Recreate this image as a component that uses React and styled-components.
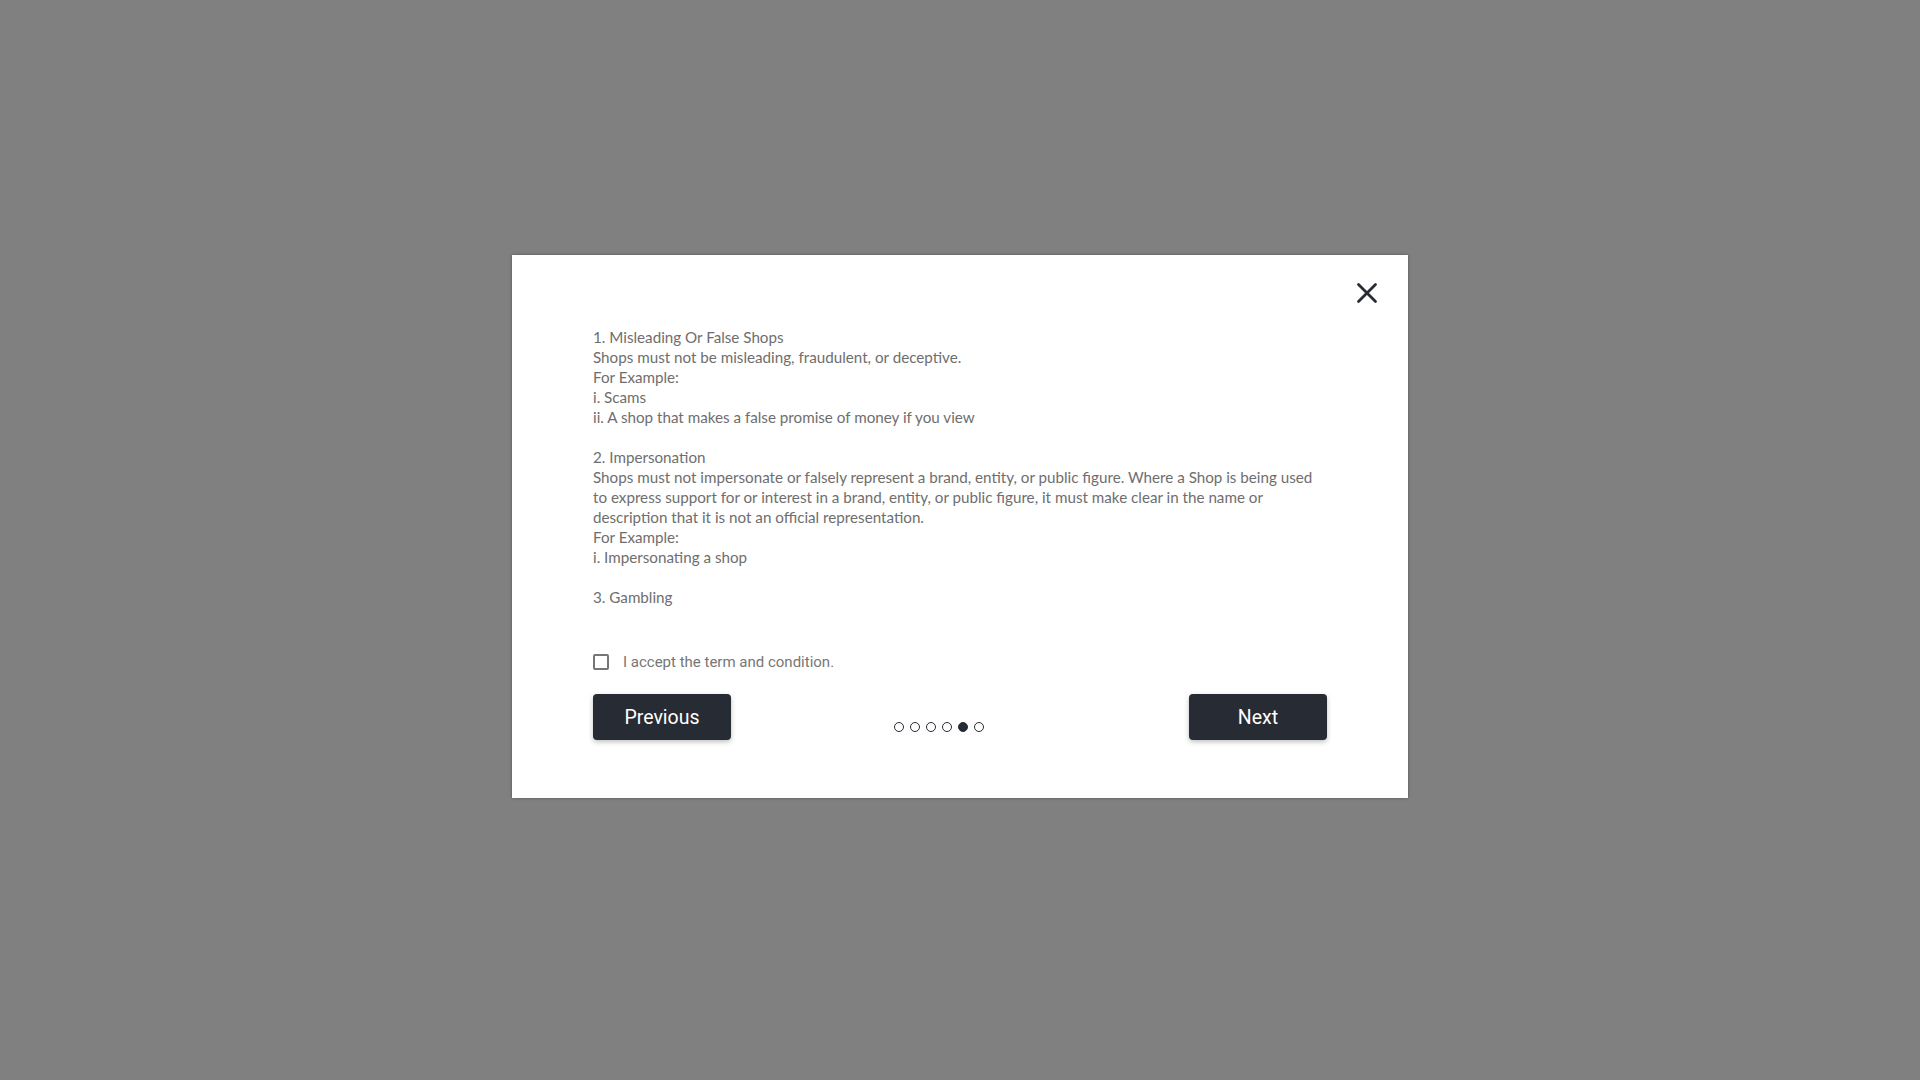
import React, { useState } from "react";
import styled, { createGlobalStyle } from "styled-components";

const GlobalStyle = createGlobalStyle`
    html, body {
        margin: 0;
        padding: 0;
        height: 100%;
    }
    body {
        background: #808080;
        font-family: "Lato", "Liberation Sans", sans-serif;
    }
    #root {
        height: 100%;
    }
`;

const sections = [
    {
        title: "1. Misleading Or False Shops",
        lines: [
            "Shops must not be misleading, fraudulent, or deceptive.",
            "For Example:",
            "i. Scams",
            "ii. A shop that makes a false promise of money if you view",
        ],
    },
    {
        title: "2. Impersonation",
        lines: [
            "Shops must not impersonate or falsely represent a brand, entity, or public figure. Where a Shop is being used to express support for or interest in a brand, entity, or public figure, it must make clear in the name or description that it is not an official representation.",
            "For Example:",
            "i. Impersonating a shop",
        ],
    },
    {
        title: "3. Gambling",
        lines: [],
    },
];

const App = () => {
    const [accepted, setAccepted] = useState(false);
    const step = 4;

    return (
        <>
            <GlobalStyle />
            <Overlay>
                <Modal>
                    <CloseBtn aria-label="close">
                        <svg width="22" height="22" viewBox="0 0 22 22">
                            <path d="M2.5 2.5 L19.5 19.5 M19.5 2.5 L2.5 19.5" stroke="#272b33" strokeWidth="2.8" strokeLinecap="round" />
                        </svg>
                    </CloseBtn>
                    <Terms>
                        {sections.map((s) => (
                            <Section key={s.title}>
                                {s.title}
                                {s.lines.map((l) => (
                                    <React.Fragment key={l}>
                                        <br />
                                        {l}
                                    </React.Fragment>
                                ))}
                            </Section>
                        ))}
                    </Terms>
                    <AcceptRow>
                        <CheckBox
                            type="checkbox"
                            checked={accepted}
                            onChange={(e) => setAccepted(e.target.checked)}
                        />
                        I accept the term and condition.
                    </AcceptRow>
                    <Footer>
                        <NavBtn>Previous</NavBtn>
                        <Dots>
                            {[0, 1, 2, 3, 4, 5].map((i) => (
                                <Dot key={i} $active={i === step} />
                            ))}
                        </Dots>
                        <NavBtn>Next</NavBtn>
                    </Footer>
                </Modal>
            </Overlay>
        </>
    );
};

export default App;

const Overlay = styled.div`
    height: 100%;
    display: flex;
    align-items: flex-start;
    justify-content: center;
    padding-top: 255px;
    box-sizing: border-box;
`;

const Modal = styled.div`
    position: relative;
    width: 896px;
    height: 543px;
    box-sizing: border-box;
    background: #fff;
    padding: 72px 81px 58px;
    box-shadow: 0 0 3px rgba(0, 0, 0, 0.35);
    display: flex;
    flex-direction: column;
`;

const CloseBtn = styled.button`
    position: absolute;
    top: 27px;
    right: 30px;
    width: 22px;
    height: 22px;
    padding: 0;
    border: none;
    background: none;
    cursor: pointer;
    display: flex;
`;

const Terms = styled.div`
    font-size: 15.2px;
    line-height: 20px;
    color: #6e6e6e;
`;

const Section = styled.p`
    margin: 0 0 20px;
    &:last-child {
        margin-bottom: 0;
    }
`;

const AcceptRow = styled.label`
    display: flex;
    align-items: center;
    gap: 14px;
    margin-top: 45px;
    height: 20px;
    font-family: "Roboto", "Liberation Sans", sans-serif;
    font-size: 15px;
    color: #767676;
    cursor: pointer;
`;

const CheckBox = styled.input`
    appearance: none;
    margin: 0;
    width: 16px;
    height: 16px;
    border: 2px solid #767676;
    border-radius: 2px;
    box-sizing: border-box;
    cursor: pointer;
    &:checked {
        background: #272b33;
        border-color: #272b33;
    }
`;

const Footer = styled.div`
    display: flex;
    align-items: center;
    justify-content: space-between;
    margin-top: 22px;
`;

const NavBtn = styled.button`
    width: 138px;
    height: 46px;
    border: none;
    border-radius: 4px;
    background: #272b33;
    color: #fff;
    font-family: "Roboto", "Liberation Sans", sans-serif;
    font-size: 19.5px;
    font-weight: 400;
    padding-top: 2px;
    box-shadow: 0 2px 5px rgba(0, 0, 0, 0.25);
    cursor: pointer;
`;

const Dots = styled.div`
    display: flex;
    gap: 6px;
    margin-top: 20px;
    margin-right: 43px;
`;

const Dot = styled.span`
    width: 10px;
    height: 10px;
    box-sizing: border-box;
    border-radius: 50%;
    border: 1.5px solid #272b33;
    background: ${(p) => (p.$active ? "#272b33" : "transparent")};
`;
